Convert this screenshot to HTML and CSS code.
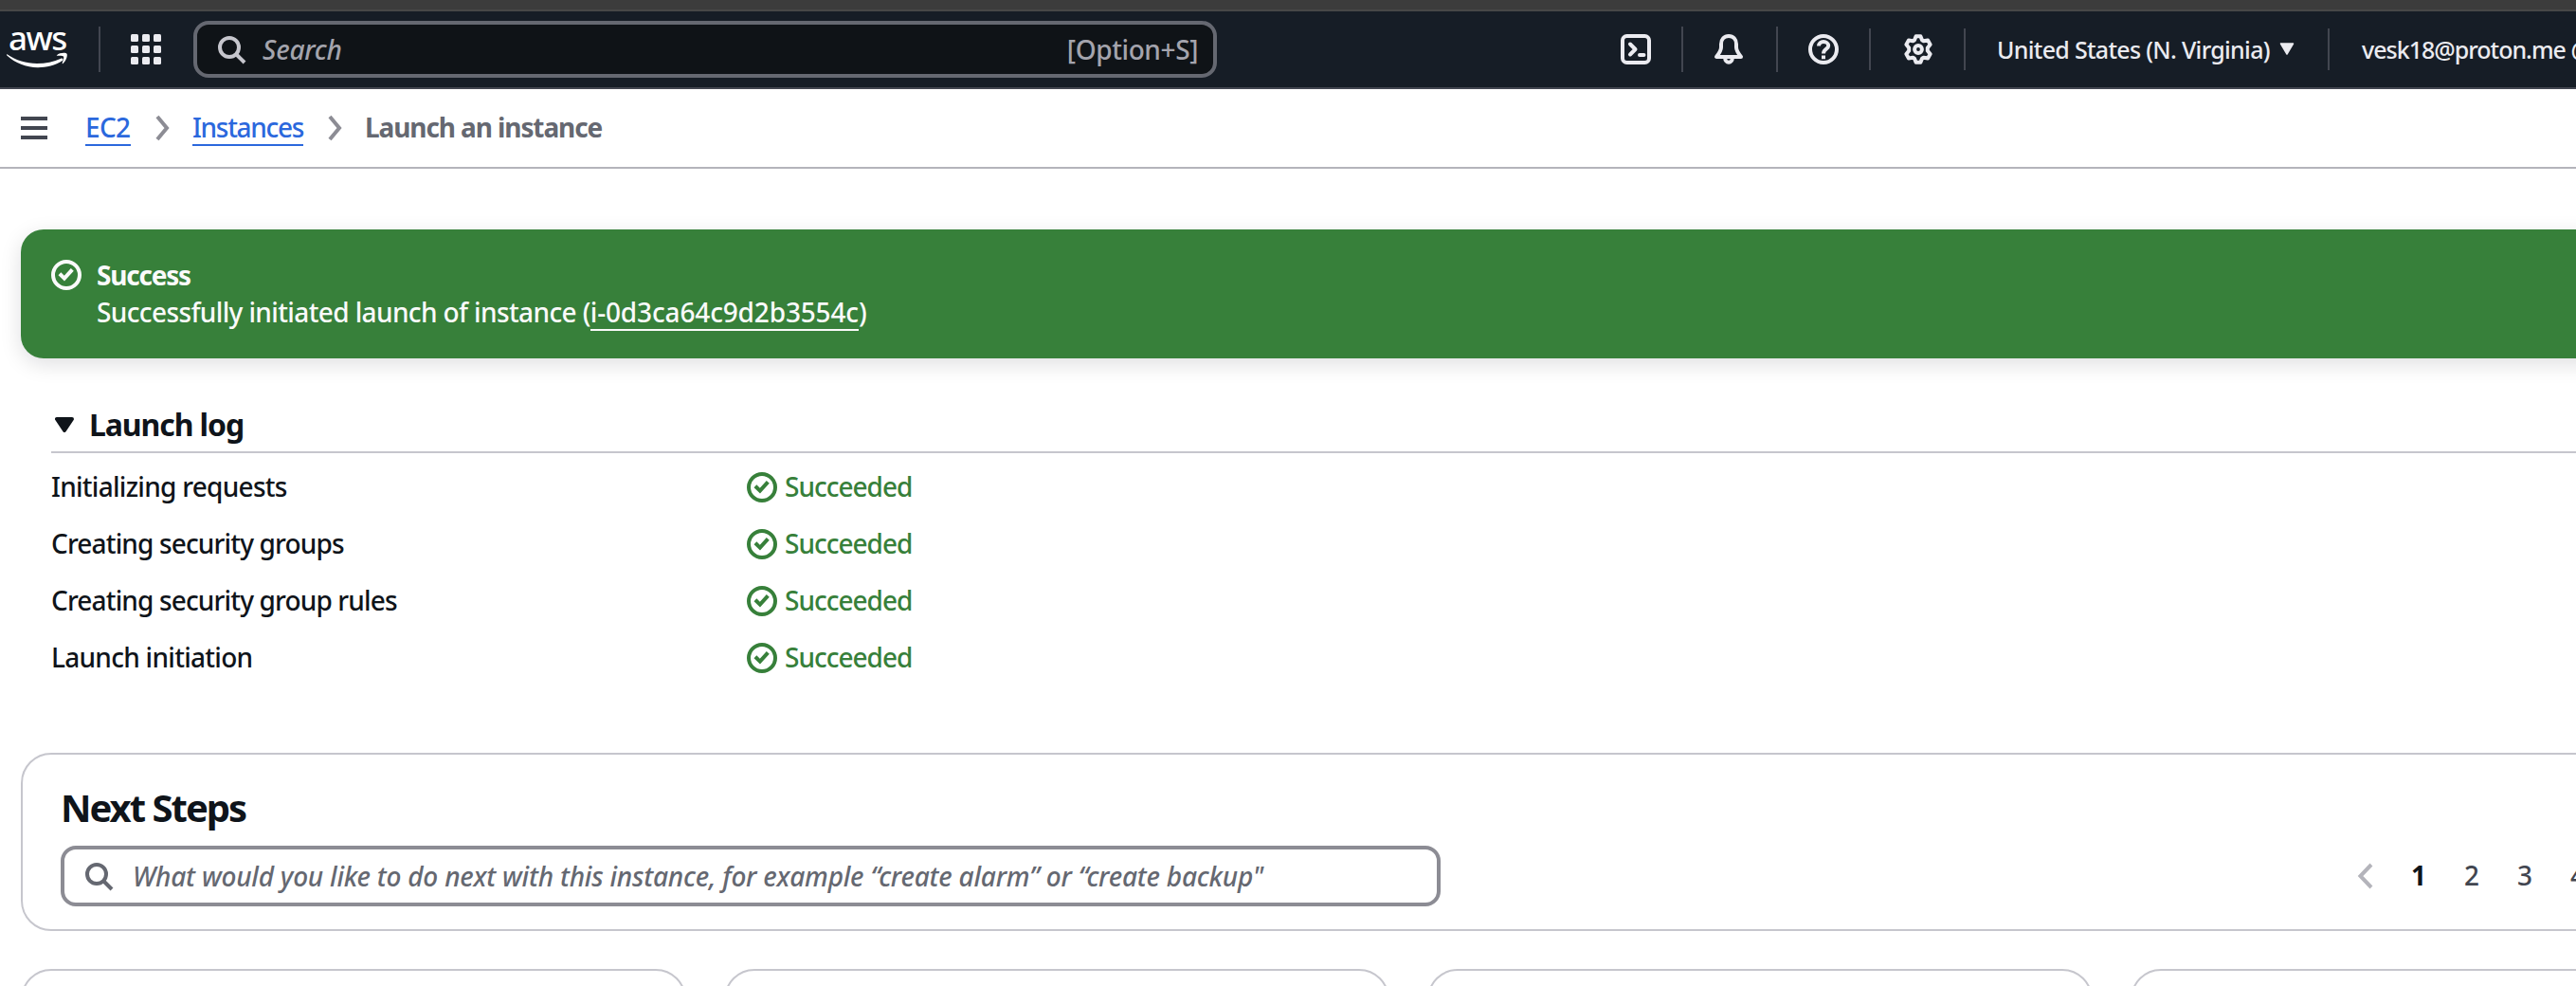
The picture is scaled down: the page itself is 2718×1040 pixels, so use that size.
FILE: index.html
```html
<!DOCTYPE html>
<html lang="en">
<head>
<meta charset="utf-8">
<title>Launch an instance | EC2</title>
<link rel="stylesheet" href="styles.css">
</head>
<body>
<svg class="sprite" aria-hidden="true">
  <symbol id="search" viewBox="0 0 32 32"><circle cx="14" cy="14" r="10"/><path d="M21 21l9 9"/></symbol>
  <symbol id="check" viewBox="0 0 32 32"><circle cx="16" cy="16" r="14"/><path d="M8.9 14.8l5 4.9 8.4-9.4"/></symbol>
  <symbol id="chevron" viewBox="0 0 20 32"><path d="M4 4l10 12L4 28"/></symbol>
</svg>

<div class="window-edge"></div>
<header class="navbar">
  <svg class="logo" viewBox="0 0 72 60">
    <text x="9" y="30.5" class="logo-text">aws</text>
    <path fill="#fff" d="M7.5 35.3c9.500 6.500 20 9.700 31.500 9.700 9 0 18-1.900 25.300-5.300 1.700-.8 3.200 1 1.500 2.300C58.500 47 48.500 49.200 40 49.200c-12.500 0-24-4.700-32.400-12.400-.9-.8-.7-2-.1-1.500z"/>
    <path fill="#fff" d="M60 36.200c2.600-2.600 9.300-3 10.500-1.500 1.100 1.500-.7 7.500-4 10.200-.6.500-1 .2-.8-.5.800-2.200 2.100-6 1.300-7-.8-.9-4.400-.8-6.500-.6-.7.100-.9-.2-.5-.6z"/>
  </svg>
  <i class="sep sep-logo"></i>
  <div class="apps"><i></i><i></i><i></i><i></i><i></i><i></i><i></i><i></i><i></i></div>
  <div class="nav-search">
    <svg class="icon"><use href="#search"/></svg>
    <span class="hint">Search</span>
    <span class="kbd">[Option+S]</span>
  </div>
  <svg class="icon tool-shell" viewBox="0 0 32 32"><rect x="2" y="2" width="28" height="28" rx="4.500"/><path stroke-linecap="round" stroke-linejoin="round" d="M10 10.500l5.500 5.500-5.500 5.500M20 22h4.500"/></svg>
  <i class="sep"></i>
  <svg class="icon tool-bell" viewBox="0 0 32 32" stroke-linejoin="round"><path d="M16 2c-4.800 0-8 3.600-8 8.500v3.500c0 3.500-2 6-5 10h26c-3-4-5-6.500-5-10v-3.500c0-4.900-3.200-8.500-8-8.500z"/><path d="M12.200 25.500a3.800 4.300 0 0 0 7.600 0"/></svg>
  <i class="sep"></i>
  <svg class="icon tool-help" viewBox="0 0 32 32"><circle cx="16" cy="16" r="14"/><path d="M11 12.600c0-3 2.200-4.500 5-4.500s5.200 1.600 5.200 4.200c0 3.700-5.200 3-5.200 8.200M16 22.600v3.600"/></svg>
  <i class="sep short"></i>
  <svg class="icon tool-gear" viewBox="0 0 32 32" stroke-linejoin="round"><path d="M13.600 2.200h4.800l1.600 4 1.600 1 4.500-.6 2.500 4.400-2.800 3.500v3l2.800 3.500-2.500 4.400-4.500-.6-1.600 1-1.600 4h-4.800l-1.600-4-1.600-1-4.500.6-2.500-4.400 2.800-3.500v-3L3.400 11l2.500-4.400 4.500.6 1.600-1z"/><circle cx="16" cy="16" r="3.900"/></svg>
  <i class="sep short"></i>
  <span class="region">United States (N. Virginia)</span>
  <svg class="region-caret" viewBox="0 0 16 14"><path d="M1.500 1h13L8 12z"/></svg>
  <i class="sep short sep-user"></i>
  <span class="user">vesk18@proton.me @</span>
</header>

<nav class="crumbs">
  <div class="menu"><i></i><i></i><i></i></div>
  <a class="ec2">EC2</a>
  <svg class="crumb-sep"><use href="#chevron"/></svg>
  <a class="instances">Instances</a>
  <svg class="crumb-sep"><use href="#chevron"/></svg>
  <b>Launch an instance</b>
</nav>

<main>
  <section class="flash">
    <svg class="icon"><use href="#check"/></svg>
    <div>
      <h2>Success</h2>
      <p>Successfully initiated launch of instance (<a>i-0d3ca64c9d2b3554c</a>)</p>
    </div>
  </section>

  <section class="log">
    <h3><svg viewBox="0 0 20 16"><path d="M2 2h16l-8 12z"/></svg>Launch log</h3>
    <ul>
      <li><span>Initializing requests</span><em><svg class="icon"><use href="#check"/></svg><b>Succeeded</b></em></li>
      <li><span class="tight">Creating security groups</span><em><svg class="icon"><use href="#check"/></svg><b>Succeeded</b></em></li>
      <li><span class="tight">Creating security group rules</span><em><svg class="icon"><use href="#check"/></svg><b>Succeeded</b></em></li>
      <li><span>Launch initiation</span><em><svg class="icon"><use href="#check"/></svg><b>Succeeded</b></em></li>
    </ul>
  </section>

  <section class="next">
    <h1>Next Steps</h1>
    <div class="next-tools">
      <div class="filter">
        <svg class="icon"><use href="#search"/></svg>
        <span>What would you like to do next with this instance, for example “create alarm” or “create backup"</span>
      </div>
      <div class="pager">
        <svg viewBox="0 0 24 32"><path d="M18 4L6.500 16 18 28"/></svg>
        <b>1</b><span>2</span><span>3</span><span>4</span>
      </div>
    </div>
  </section>

  <section class="cards"><article></article><article></article><article></article><article></article></section>
</main>
</body>
</html>
```
FILE: styles.css
```css
* { box-sizing: border-box; margin: 0; padding: 0; }

html, body { height: 1040px; overflow: hidden; }
body {
  background: #fff;
  color: #0f141a;
  font: 500 28px/40px "Noto Sans", "Open Sans", sans-serif;
}

.sprite { display: none; }
.icon {
  flex: none;
  width: 32px;
  height: 32px;
  fill: none;
  stroke: currentColor;
  stroke-width: 4;
}

.window-edge { height: 12px; background: #3c3c3c; border-bottom: 2px solid #474747; }

/* Top navigation */
.navbar {
  display: flex;
  align-items: center;
  height: 82px;
  background: #161d26;
  border-bottom: 2px solid #424650;
  color: #ebebf0;
  white-space: nowrap;
}
.navbar > * { flex: none; }
.logo { width: 72px; height: 60px; }
.logo-text { font-size: 35px; font-weight: 500; letter-spacing: -1.500px; fill: #fff; }
.sep { width: 2px; height: 48px; margin-left: 32px; background: #424650; }
.sep.short { height: 44px; }
.apps {
  display: grid;
  grid-template-columns: repeat(3, 8px);
  gap: 4px;
  margin-left: 32px;
}
.apps i { height: 8px; border-radius: 1.5px; background: #ebebf0; }
.nav-search {
  display: flex;
  align-items: center;
  width: 1080px;
  height: 60px;
  margin-left: 34px;
  padding: 0 16px 0 20px;
  background: #0f1317;
  border: 4px solid #656871;
  border-radius: 16px;
}
.nav-search .icon { color: #c6c6cd; }
.hint { margin-left: 17px; color: #a4a4ad; font-style: italic; letter-spacing: -.2px; }
.kbd { margin-left: auto; color: #a4a4ad; letter-spacing: -.4px; }
.tool-shell { margin-left: 426px; }
.tool-bell { margin-left: 32px; }
.tool-bell + .sep { margin-left: 34px; }
.tool-help { margin-left: 32px; }
.tool-gear { margin-left: 34px; }
.region, .user { font-size: 25px; }
.region { width: 288px; margin-left: 33px; letter-spacing: -.7px; }
.region-caret {
  width: 16px;
  height: 14px;
  margin-left: 10px;
  fill: currentColor;
  stroke: currentColor;
  stroke-width: 1.500;
  stroke-linejoin: round;
}
.sep-user { margin-left: 35px; }
.user { margin-left: 34px; letter-spacing: -1px; }

/* Breadcrumbs */
.crumbs {
  display: flex;
  align-items: center;
  height: 84px;
  border-bottom: 2px solid #b4b4bb;
}
.menu { display: grid; gap: 6px; width: 28px; margin: 0 40px 0 22px; }
.menu i { height: 4px; background: #424650; }
.crumbs a, .crumbs b { line-height: 36px; border-bottom: 2px solid transparent; white-space: nowrap; }
.crumbs a { color: #2b68dd; border-color: currentColor; }
.ec2 { width: 48px; letter-spacing: -.7px; }
.instances { width: 117px; letter-spacing: -1.300px; }
.crumbs b { color: #656871; letter-spacing: -1.100px; }
.crumb-sep {
  width: 20px;
  height: 32px;
  margin: 0 21px 0 24px;
  fill: none;
  stroke: #8c8c94;
  stroke-width: 4;
}

/* Page content, wider than the viewport */
main { width: 2972px; height: 862px; padding: 64px 22px 0; overflow: hidden; }

.flash {
  display: flex;
  gap: 16px;
  height: 136px;
  padding: 27px 32px;
  background: #37803a;
  border-radius: 24px;
  box-shadow: 0 6px 22px rgba(0, 7, 22, .13);
  color: #fafafa;
}
.flash .icon { margin-top: 5px; }
.flash h2 { font-size: 28px; line-height: 42px; height: 40px; letter-spacing: -1.200px; }
.flash p { letter-spacing: -.62px; }
.flash a {
  display: inline-block;
  height: 40px;
  border-bottom: 2px solid currentColor;
  letter-spacing: -.15px;
  vertical-align: top;
}

.log { margin-top: 50px; padding-left: 32px; }
.log h3 {
  display: flex;
  align-items: center;
  gap: 16px;
  height: 50px;
  padding: 0 0 8px 4px;
  border-bottom: 2px solid #c6c6cd;
  font-size: 32px;
  letter-spacing: -1.100px;
}
.log h3 svg {
  width: 20px;
  height: 16px;
  fill: currentColor;
  stroke: currentColor;
  stroke-width: 4;
  stroke-linejoin: round;
}
.log ul { margin-top: 6px; list-style: none; }
.log li { display: grid; grid-template-columns: 734px auto; align-items: center; height: 60px; }
.log li span { padding-bottom: 2px; letter-spacing: -.72px; }
.log li .tight { letter-spacing: -.85px; }
.log em { display: flex; align-items: center; gap: 8px; color: #37803a; font-style: normal; }
.log em b { padding-bottom: 2px; font-weight: 500; letter-spacing: -1px; }

.next {
  height: 188px;
  margin-top: 70px;
  padding: 32px 40px 24px;
  border: 2px solid #c6c6cd;
  border-radius: 32px;
}
.next h1 { margin: 0 0 16px; font-size: 40px; line-height: 48px; letter-spacing: -2px; }
.next-tools { display: flex; align-items: center; }
.filter {
  display: flex;
  flex: none;
  align-items: center;
  width: 1456px;
  height: 64px;
  padding-left: 20px;
  border: 4px solid #8c8c94;
  border-radius: 16px;
  color: #656871;
}
.filter span { margin-left: 20px; font-style: italic; letter-spacing: -.22px; white-space: nowrap; }
.pager { display: flex; align-items: center; margin-left: 964px; color: #424650; }
.pager svg { width: 24px; height: 32px; margin-right: 16px; fill: none; stroke: #b4b4bb; stroke-width: 4; }
.pager b, .pager span { width: 56px; padding-bottom: 2px; text-align: center; }
.pager b { color: #0f141a; font-weight: 700; }

.cards { display: grid; grid-template-columns: repeat(4, 702px); gap: 40px; margin-top: 40px; }
.cards article { height: 240px; border: 2px solid #c6c6cd; border-radius: 32px; }
```
